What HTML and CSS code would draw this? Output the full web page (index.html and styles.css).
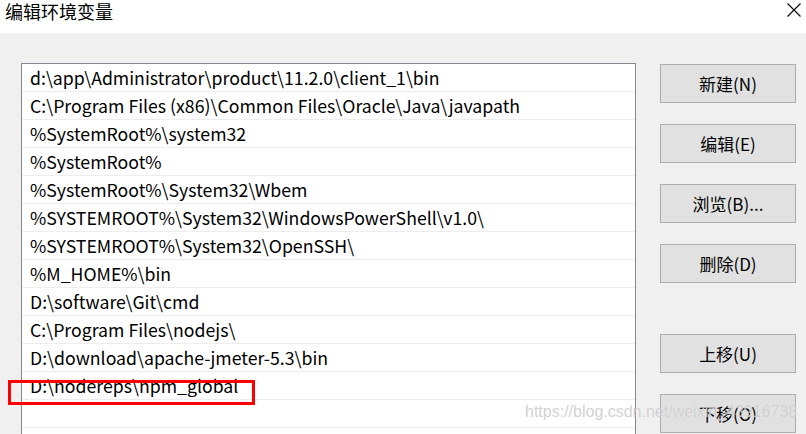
FILE: index.html
```html
<!DOCTYPE html>
<html lang="zh-CN">
<head>
<meta charset="utf-8">
<link rel="stylesheet" href="styles.css">
</head>
<body>
<div class="titlebar">
  <span class="title">编辑环境变量</span>
  <svg class="close" width="14" height="14" viewBox="0 0 14 14"><path d="M0.5 0.5L13.5 13.5M13.5 0.5L0.5 13.5" stroke="#000" stroke-width="1.1" fill="none"/></svg>
</div>
<div class="body">
  <div class="listbox">
    <div class="row">d:\app\Administrator\product\11.2.0\client_1\bin</div>
    <div class="row">C:\Program Files (x86)\Common Files\Oracle\Java\javapath</div>
    <div class="row">%SystemRoot%\system32</div>
    <div class="row">%SystemRoot%</div>
    <div class="row">%SystemRoot%\System32\Wbem</div>
    <div class="row">%SYSTEMROOT%\System32\WindowsPowerShell\v1.0\</div>
    <div class="row">%SYSTEMROOT%\System32\OpenSSH\</div>
    <div class="row">%M_HOME%\bin</div>
    <div class="row">D:\software\Git\cmd</div>
    <div class="row">C:\Program Files\nodejs\</div>
    <div class="row">D:\download\apache-jmeter-5.3\bin</div>
    <div class="row highlight">D:\nodereps\npm_global</div>
    <div class="row"></div>
  </div>
  <div class="buttons">
    <div class="btn">新建(N)</div>
    <div class="btn">编辑(E)</div>
    <div class="btn">浏览(B)...</div>
    <div class="btn">删除(D)</div>
    <div class="btn spaced">上移(U)</div>
    <div class="btn">下移(O)</div>
  </div>
</div>
<div class="watermark">https://blog.csdn.net/weixin_43916738</div>
</body>
</html>
```
FILE: styles.css
```css
html, body {
  margin: 0;
  padding: 0;
  width: 806px;
  height: 434px;
  overflow: hidden;
  font-family: "Noto Sans CJK SC", "Noto Sans", sans-serif;
  color: #000;
  position: relative;
}
.titlebar {
  height: 33px;
  background: #fff;
  display: flex;
  align-items: flex-start;
  justify-content: space-between;
  padding: 0 5px;
  box-sizing: border-box;
}
.title {
  font-size: 18px;
  line-height: 22px;
}
.close {
  margin-top: 3px;
}
.body {
  background: #f0f0f0;
  height: 401px;
  overflow: hidden;
  display: flex;
  padding: 30px 0 0 21px;
  box-sizing: border-box;
}
.listbox {
  width: 615px;
  height: 380px;
  background: #fff;
  border: 1px solid #828790;
  border-bottom: none;
  box-sizing: border-box;
  flex: none;
}
.row {
  height: 28px;
  border-bottom: 1px solid #ededed;
  box-sizing: border-box;
  padding-left: 8px;
  font-size: 17.7px;
  line-height: 27px;
  white-space: nowrap;
  position: relative;
}
.row.highlight::after {
  content: "";
  position: absolute;
  left: -14px;
  top: 8px;
  width: 241px;
  height: 19px;
  border: 3px solid #ff0000;
}
.buttons {
  margin-left: 24px;
  display: flex;
  flex-direction: column;
  gap: 21px;
  padding-top: 1px;
}
.btn {
  width: 136px;
  height: 39px;
  flex: none;
  box-sizing: border-box;
  background: #e1e1e1;
  border: 1px solid #adadad;
  font-size: 17px;
  display: flex;
  align-items: center;
  justify-content: center;
}
.btn.spaced {
  margin-top: 30px;
}
.watermark {
  position: absolute;
  left: 525px;
  top: 403px;
  font-family: "Liberation Sans", Arial, sans-serif;
  font-size: 16px;
  color: rgba(200, 200, 200, 0.85);
  text-shadow: 0 0 1px rgba(255,255,255,0.6);
  white-space: nowrap;
}
```
